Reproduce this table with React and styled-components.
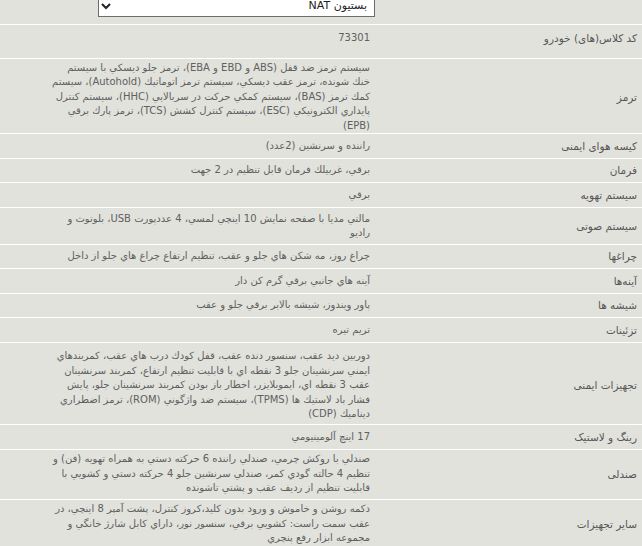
import React from "react";
import styled, { createGlobalStyle } from "styled-components";

const Global = createGlobalStyle`
  *, *::before, *::after { box-sizing: border-box; }
  html, body { margin: 0; padding: 0; background: #e2e2dd; overflow: hidden; }
  body { font-family: "DejaVu Sans", sans-serif; }
`;

const Sheet = styled.div`
  direction: rtl;
  width: 642px;
  margin-top: -6px;
  background: #e2e2dd;
  color: #666;
  font-family: "DejaVu Sans", sans-serif;
`;

const Row = styled.div`
  display: grid;
  grid-template-columns: 267px 297px 1fr;
  align-items: center;
  border-bottom: 1px solid #fff;
  min-height: 24.5px;
  padding: ${(p) => (p.$pad ? `${p.$pad[0]}px 0 ${p.$pad[1]}px` : "0")};
`;

const Label = styled.div`
  padding: 0 5px;
  font-size: 10.5px;
  line-height: 14.5px;
  color: #565656;
`;

const Value = styled.div`
  padding: 0 5px 0 2px;
  font-size: 10px;
  line-height: 14.5px;
  color: #606060;
`;

const Line = styled.div`
  white-space: nowrap;
  text-align: right;
`;

const SelectCell = styled.div`
  padding: 0 0 7px;
  align-self: start;
`;

const Picker = styled.select`
  direction: rtl;
  width: 277px;
  height: 22px;
  background: #fff;
  border: 1px solid #6d6d6d;
  border-radius: 0;
  font-family: "DejaVu Sans", sans-serif;
  font-size: 11px;
  color: #222;
  padding: 0 3px;
`;

const rows = [
  { k: "کد کلاس(های) خودرو", v: ["73301"], pad: [6, 12.5] },
  {
    k: "ترمز",
    pad: [2, 0],
    v: [
      "سيستم ترمز ضد قفل (ABS و EBD و EBA)، ترمز جلو ديسكي با سيستم",
      "خنك شونده، ترمز عقب ديسكي، سيستم ترمز اتوماتيك (Autohold)، سيستم",
      "كمك ترمز (BAS)، سيستم كمكي حركت در سربالايي (HHC)، سيستم كنترل",
      "پايداري الكترونيكي (ESC)، سيستم كنترل كشش (TCS)، ترمز پارك برقي",
      "(EPB)",
    ],
  },
  { k: "کیسه هوای ایمنی", v: ["راننده و سرنشين (2عدد)"] },
  { k: "فرمان", v: ["برقي، غربيلك فرمان قابل تنظيم در 2 جهت"] },
  { k: "سیستم تهویه", v: ["برقي"] },
  {
    k: "سیستم صوتی",
    pad: [4, 3],
    v: ["مالتي مديا با صفحه نمايش 10 اينچي لمسي، 4 عددپورت USB، بلوتوث و", "راديو"],
  },
  { k: "چراغها", v: ["چراغ روز، مه شكن هاي جلو و عقب، تنظيم ارتفاع چراغ هاي جلو از داخل"] },
  { k: "آینه‌ها", v: ["آينه هاي جانبي برقي گرم كن دار"] },
  { k: "شیشه ها", v: ["پاور ويندوز، شيشه بالابر برقي جلو و عقب"] },
  { k: "تزئینات", v: ["تريم تيره"] },
  {
    k: "تجهیزات ایمنی",
    pad: [6.5, 2.5],
    v: [
      "دوربين ديد عقب، سنسور دنده عقب، قفل كودك درب هاي عقب، كمربندهاي",
      "ايمني سرنشينان جلو 3 نقطه اي با قابليت تنظيم ارتفاع، كمربند سرنشينان",
      "عقب 3 نقطه اي، ايموبلايزر، اخطار باز بودن كمربند سرنشينان جلو، پايش",
      "فشار باد لاستيك ها (TPMS)، سيستم ضد واژگوني (ROM)، ترمز اضطراري",
      "ديناميك (CDP)",
    ],
  },
  { k: "رینگ و لاستیک", v: ["17 اينچ آلومينيومي"] },
  {
    k: "صندلی",
    pad: [2.5, 3],
    v: [
      "صندلي با روكش چرمي، صندلي راننده 6 حركته دستي به همراه تهويه (فن) و",
      "تنظيم 4 حالته گودي كمر، صندلي سرنشين جلو 4 حركته دستي و كشويي با",
      "قابليت تنظيم از رديف عقب و پشتي تاشونده",
    ],
  },
  {
    k: "سایر تجهیزات",
    pad: [2.5, 3],
    v: [
      "دكمه روشن و خاموش و ورود بدون كليد،كروز كنترل، پشت آمپر 8 اينچي، در",
      "عقب سمت راست: كشويي برقي، سنسور نور، داراي كابل شارژ خانگي و",
      "مجموعه ابزار رفع پنچري",
    ],
  },
];

export default function App() {
  return (
    <>
      <Global />
      <Sheet>
        <Row>
          <Label />
          <SelectCell>
            <Picker defaultValue="nat">
              <option value="nat">بستيون NAT</option>
            </Picker>
          </SelectCell>
          <div />
        </Row>
        {rows.map((r) => (
          <Row key={r.k} $pad={r.pad}>
            <Label>{r.k}</Label>
            <Value>
              {r.v.map((line, i) => (
                <Line key={i}>{line}</Line>
              ))}
            </Value>
            <div />
          </Row>
        ))}
      </Sheet>
    </>
  );
}
